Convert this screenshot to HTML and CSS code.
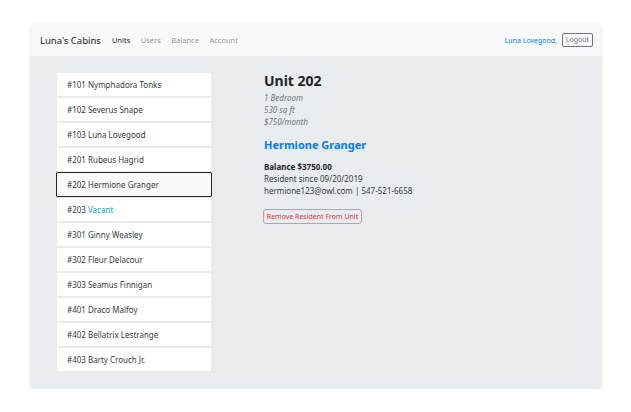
FILE: index.html
```html
<!DOCTYPE html>
<html>
<head>
<meta charset="utf-8">
<link rel="stylesheet" href="styles.css">
</head>
<body>
<div class="card">
  <nav class="navbar">
    <span class="brand">Luna's Cabins</span>
    <a class="nav-link active">Units</a>
    <a class="nav-link">Users</a>
    <a class="nav-link">Balance</a>
    <a class="nav-link">Account</a>
    <span class="spacer"></span>
    <span class="user">Luna Lovegood,</span>
    <button class="logout">Logout</button>
  </nav>
  <main class="main">
    <ul class="units">
      <li class="unit">#101 Nymphadora Tonks</li>
      <li class="unit">#102 Severus Snape</li>
      <li class="unit">#103 Luna Lovegood</li>
      <li class="unit">#201 Rubeus Hagrid</li>
      <li class="unit selected">#202 Hermione Granger</li>
      <li class="unit">#203 <span class="vacant">Vacant</span></li>
      <li class="unit">#301 Ginny Weasley</li>
      <li class="unit">#302 Fleur Delacour</li>
      <li class="unit">#303 Seamus Finnigan</li>
      <li class="unit">#401 Draco Malfoy</li>
      <li class="unit">#402 Bellatrix Lestrange</li>
      <li class="unit">#403 Barty Crouch Jr.</li>
    </ul>
    <section class="detail">
      <h1 class="title">Unit 202</h1>
      <div class="specs">
        <div>1 Bedroom</div>
        <div>530 sq ft</div>
        <div>$750/month</div>
      </div>
      <h2 class="resident">Hermione Granger</h2>
      <div class="info">
        <div><b>Balance $3750.00</b></div>
        <div>Resident since 09/20/2019</div>
        <div>hermione123@owl.com | 547-521-6658</div>
      </div>
      <button class="remove">Remove Resident From Unit</button>
    </section>
  </main>
</div>
</body>
</html>
```
FILE: styles.css
```css
html, body {
  margin: 0;
  padding: 0;
  background: #ffffff;
  font-family: "Noto Sans", "DejaVu Sans", sans-serif;
  color: #212529;
}
body {
  padding: 24px 30px 0 31px;
}
.card {
  width: 570px;
  box-shadow: 0 1px 3px rgba(0,0,0,0.15);
  background: #e9ecef;
}
.navbar {
  display: flex;
  align-items: center;
  height: 32px;
  background: #f8f9fa;
  padding: 0 8px 0 9px;
  font-size: 7.5px;
}
.brand {
  font-size: 9.5px;
  color: #212529;
  margin-right: 11px;
}
.nav-link {
  color: rgba(0,0,0,0.45);
  margin-right: 10.5px;
}
.nav-link.active {
  color: rgba(0,0,0,0.9);
}
.spacer { flex: 1; }
.user {
  color: #007bff;
  font-size: 7px;
  margin-right: 5px;
}
.logout {
  font-family: inherit;
  font-size: 7px;
  color: #6c757d;
  background: transparent;
  border: 1px solid #6c757d;
  border-radius: 2px;
  height: 14px;
  width: 31px;
  padding: 0;
  line-height: 12px;
}
.main {
  display: flex;
  padding: 16px 0 17px 25px;
}
.units {
  list-style: none;
  margin: 0;
  padding: 0;
  width: 156px;
}
.unit {
  background: #ffffff;
  border: 1px solid #e9ecef;
  border-radius: 1px;
  height: 23px;
  line-height: 23px;
  font-size: 8px;
  padding-left: 10px;
  color: #343a40;
}
.unit.selected {
  background: #f8f9fa;
  border-color: #212529;
}
.vacant { color: #17a2b8; }
.detail {
  margin-left: 52px;
  display: flex;
  flex-direction: column;
  align-items: flex-start;
}
.title {
  margin: 0;
  font-size: 14px;
  line-height: 17px;
  font-weight: 700;
  color: #212529;
}
.specs {
  margin-top: 3px;
  font-size: 8px;
  line-height: 12px;
  font-style: italic;
  color: #6c757d;
}
.resident {
  margin: 10px 0 0 0;
  font-size: 11px;
  line-height: 14px;
  font-weight: 700;
  color: #007bff;
}
.info {
  margin-top: 9px;
  font-size: 8px;
  line-height: 12px;
  color: #343a40;
}
.info b { color: #212529; }
.remove {
  margin-top: 12px;
  margin-left: -1px;
  font-family: inherit;
  font-size: 7px;
  color: #dc3545;
  background: transparent;
  border: 1px solid #ec8c95;
  border-radius: 3px;
  height: 15px;
  width: 99px;
  padding: 0;
  line-height: 13px;
}
```
